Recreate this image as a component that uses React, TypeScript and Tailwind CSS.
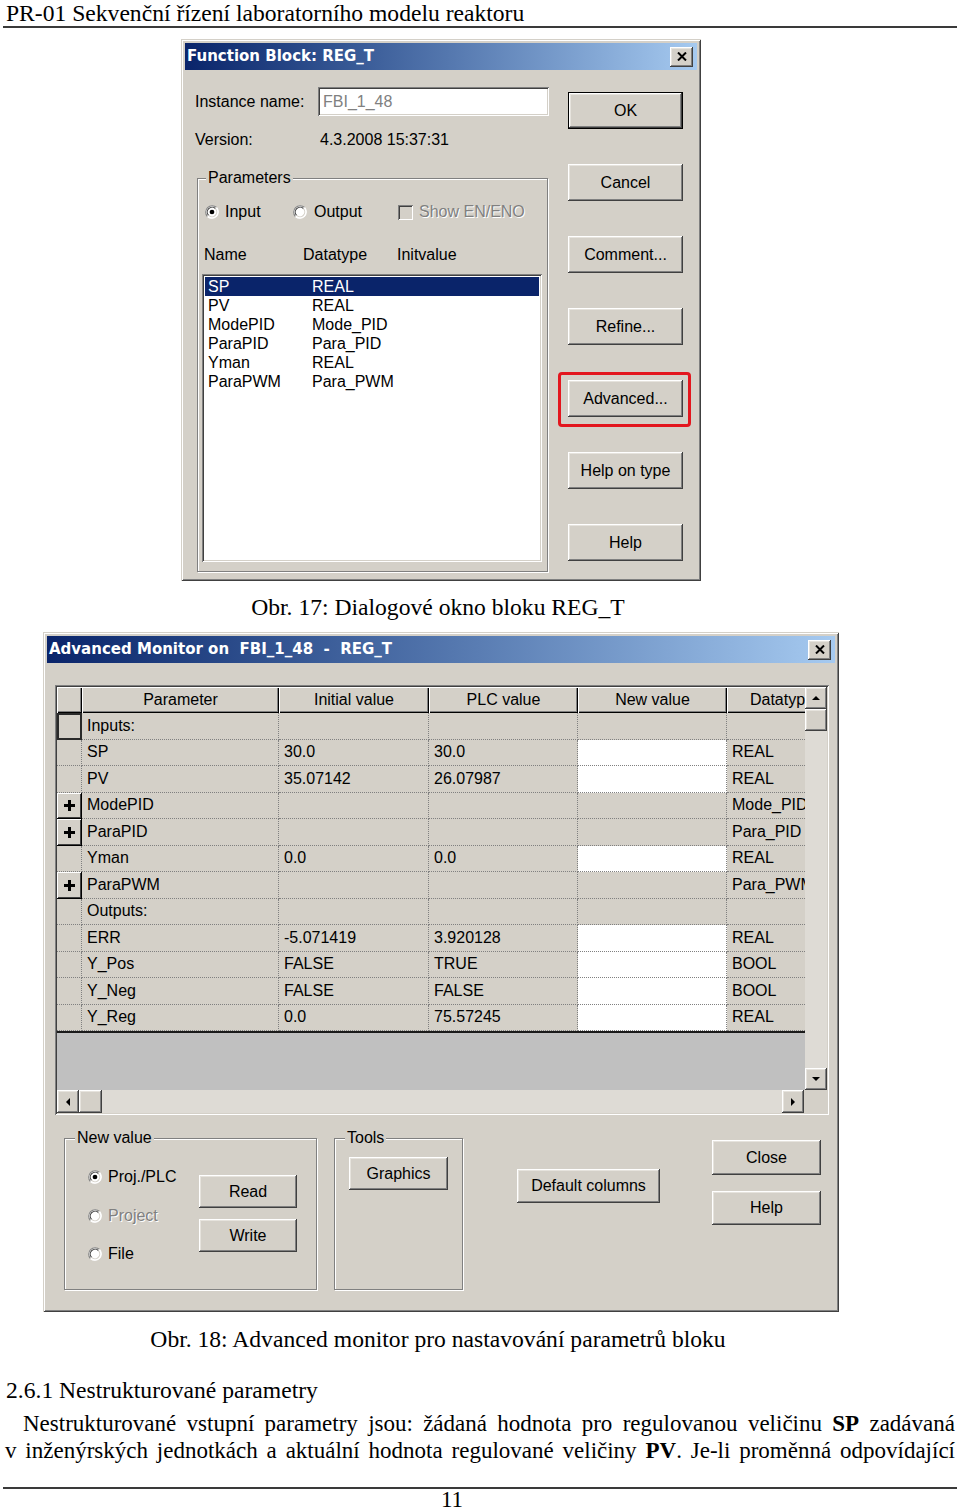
import React from "react";

const RAISED =
  "shadow-[inset_-1px_-1px_0_#404040,inset_1px_1px_0_#ffffff,inset_-2px_-2px_0_#808080,inset_2px_2px_0_#e6e3dd]";
const SUNKEN =
  "shadow-[inset_1px_1px_0_#808080,inset_-1px_-1px_0_#ffffff,inset_2px_2px_0_#404040,inset_-2px_-2px_0_#d4d0c8]";
const WINDOW =
  "shadow-[inset_1px_1px_0_#d4d0c8,inset_-1px_-1px_0_#404040,inset_2px_2px_0_#ffffff,inset_-2px_-2px_0_#808080]";
const ETCHED =
  "border border-[#808080] shadow-[inset_1px_1px_0_#ffffff,1px_1px_0_#ffffff]";

function Btn({ label, className = "" }: { label: string; className?: string }) {
  return (
    <div
      className={`flex items-center justify-center bg-[#d4d0c8] ${RAISED} ${className}`}
    >
      {label}
    </div>
  );
}

function CloseX() {
  return (
    <div
      className={`w-[23px] h-[20px] flex items-center justify-center bg-[#d4d0c8] ${RAISED}`}
    >
      <svg width="10" height="9" viewBox="0 0 10 9">
        <path d="M1 0.5 L9 8.5 M9 0.5 L1 8.5" stroke="#000" strokeWidth="2" />
      </svg>
    </div>
  );
}

function TitleBar({ title }: { title: string }) {
  return (
    <div className="h-[27px] flex items-center justify-between bg-linear-to-r from-[#0a246a] to-[#a6caf0] pl-[2px] pr-[4px]">
      <span className="text-white font-bold text-[15px] font-['DejaVu_Sans',sans-serif] whitespace-pre">
        {title}
      </span>
      <CloseX />
    </div>
  );
}

function Radio({ checked = false }: { checked?: boolean }) {
  return (
    <svg width="14" height="14" viewBox="0 0 13 13" className="shrink-0">
      <circle cx="6.5" cy="6.5" r="6" fill="#ffffff" />
      <path d="M2.26 10.74 A6 6 0 0 1 10.74 2.26" stroke="#808080" strokeWidth="1" fill="none" />
      <path d="M3.32 9.68 A4.5 4.5 0 0 1 9.68 3.32" stroke="#404040" strokeWidth="1" fill="none" />
      <path d="M10.74 2.26 A6 6 0 0 1 2.26 10.74" stroke="#ffffff" strokeWidth="1" fill="none" />
      <path d="M9.68 3.32 A4.5 4.5 0 0 1 3.32 9.68" stroke="#d4d0c8" strokeWidth="1" fill="none" />
      {checked && <circle cx="6.5" cy="6.5" r="2.2" fill="#000" />}
    </svg>
  );
}

function Arrow({ dir }: { dir: "up" | "down" | "left" | "right" }) {
  const pts =
    dir === "up"
      ? "1,7 5,3 9,7"
      : dir === "down"
      ? "1,3 5,7 9,3"
      : dir === "left"
      ? "7,1 3,5 7,9"
      : "3,1 7,5 3,9";
  return (
    <svg width="10" height="10" viewBox="0 0 10 10">
      <polygon points={pts} fill="#000" />
    </svg>
  );
}

function ScrollBtn({ dir, className = "" }: { dir: "up" | "down" | "left" | "right"; className?: string }) {
  return (
    <div className={`flex items-center justify-center bg-[#d4d0c8] ${RAISED} ${className}`}>
      <Arrow dir={dir} />
    </div>
  );
}

function Plus() {
  return (
    <svg width="11" height="11" viewBox="0 0 11 11">
      <rect x="0" y="4" width="11" height="3" fill="#000" />
      <rect x="4" y="0" width="3" height="11" fill="#000" />
    </svg>
  );
}

type Row = {
  p: string;
  i?: string;
  plc?: string;
  nv?: boolean;
  dt?: string;
  head?: "plus" | "focus";
};

const rows: Row[] = [
  { p: "Inputs:", head: "focus" },
  { p: "SP", i: "30.0", plc: "30.0", nv: true, dt: "REAL" },
  { p: "PV", i: "35.07142", plc: "26.07987", nv: true, dt: "REAL" },
  { p: "ModePID", dt: "Mode_PID", head: "plus" },
  { p: "ParaPID", dt: "Para_PID", head: "plus" },
  { p: "Yman", i: "0.0", plc: "0.0", nv: true, dt: "REAL" },
  { p: "ParaPWM", dt: "Para_PWM", head: "plus" },
  { p: "Outputs:" },
  { p: "ERR", i: "-5.071419", plc: "3.920128", nv: true, dt: "REAL" },
  { p: "Y_Pos", i: "FALSE", plc: "TRUE", nv: true, dt: "BOOL" },
  { p: "Y_Neg", i: "FALSE", plc: "FALSE", nv: true, dt: "BOOL" },
  { p: "Y_Reg", i: "0.0", plc: "75.57245", nv: true, dt: "REAL" },
];

const listRows: [string, string][] = [
  ["SP", "REAL"],
  ["PV", "REAL"],
  ["ModePID", "Mode_PID"],
  ["ParaPID", "Para_PID"],
  ["Yman", "REAL"],
  ["ParaPWM", "Para_PWM"],
];

const CELL =
  "shrink-0 h-full flex items-center pl-[5px] border-r border-b border-dotted border-[#808080] whitespace-nowrap overflow-hidden";
const HEAD =
  "shrink-0 h-full flex items-center justify-center bg-[#d4d0c8] shadow-[inset_1px_1px_0_#ffffff,inset_-1px_-1px_0_#000000,inset_-2px_-2px_0_#808080] whitespace-nowrap";

function Dialog1() {
  return (
    <div
      className={`ml-[181px] mt-[11px] w-[520px] h-[542px] bg-[#d4d0c8] p-[4px] ${WINDOW} font-['Liberation_Sans',Arial,sans-serif] text-[16px] text-black`}
    >
      <TitleBar title="Function Block: REG_T" />
      <div className="flex">
        <div className="w-[364px] pl-[10px]">
          <div className="mt-[17px] h-[29px] flex items-center">
            <span className="w-[123px]">Instance name:</span>
            <div className={`w-[231px] h-[29px] bg-white ${SUNKEN} pl-[5px] flex items-center text-[#808080]`}>
              FBI_1_48
            </div>
          </div>
          <div className="mt-[12px] h-[24px] flex items-center">
            <span className="w-[125px]">Version:</span>
            <span>4.3.2008 15:37:31</span>
          </div>
          <div className={`relative mt-[26px] ml-[2px] w-[351px] h-[394px] ${ETCHED}`}>
            <span className="absolute top-[-11px] left-[8px] px-[2px] bg-[#d4d0c8] leading-[20px]">
              Parameters
            </span>
            <div className="mt-[23px] h-[20px] flex items-center pl-[7px]">
              <div className="w-[88px] flex items-center gap-[6px]">
                <Radio checked />
                <span>Input</span>
              </div>
              <div className="w-[105px] flex items-center gap-[7px]">
                <Radio />
                <span>Output</span>
              </div>
              <div className="flex items-center gap-[6px]">
                <div className={`w-[15px] h-[15px] bg-[#d4d0c8] ${SUNKEN}`} />
                <span className="text-[#808080] [text-shadow:1px_1px_0_#ffffff]">Show EN/ENO</span>
              </div>
            </div>
            <div className="mt-[23px] h-[20px] flex items-center pl-[6px]">
              <span className="w-[99px]">Name</span>
              <span className="w-[94px]">Datatype</span>
              <span>Initvalue</span>
            </div>
            <div className={`mt-[9px] ml-[4px] w-[340px] h-[288px] bg-white ${SUNKEN} pt-[3px] px-[3px]`}>
              {listRows.map(([a, b], idx) => (
                <div
                  key={a}
                  className={`h-[19px] flex items-center ${idx === 0 ? "bg-[#0a246a] text-white" : ""}`}
                >
                  <span className="w-[107px] pl-[3px]">{a}</span>
                  <span>{b}</span>
                </div>
              ))}
            </div>
          </div>
        </div>
        <div className="ml-[19px] w-[115px] pt-[22px] flex flex-col gap-[35px]">
          <div className={`h-[37px] flex items-center justify-center bg-[#d4d0c8] border border-black ${RAISED}`}>
            OK
          </div>
          <Btn label="Cancel" className="h-[37px]" />
          <Btn label="Comment..." className="h-[37px]" />
          <Btn label="Refine..." className="h-[37px]" />
          <div className="relative">
            <Btn label="Advanced..." className="h-[37px]" />
            <div className="absolute left-[-10px] right-[-8px] top-[-8px] bottom-[-10px] border-[3px] border-[#e3161e] rounded-[4px]" />
          </div>
          <Btn label="Help on type" className="h-[37px]" />
          <Btn label="Help" className="h-[37px]" />
        </div>
      </div>
    </div>
  );
}

function Grid() {
  return (
    <div className={`ml-[8px] mt-[22px] w-[774px] h-[430px] ${SUNKEN} p-[2px] flex flex-col`}>
      <div className="h-[403px] flex">
        <div className="w-[748px] shrink-0 flex flex-col overflow-hidden">
          <div className="h-[26px] flex shrink-0">
            <div className={`w-[25px] ${HEAD}`} />
            <div className={`w-[197px] ${HEAD}`}>Parameter</div>
            <div className={`w-[150px] ${HEAD}`}>Initial value</div>
            <div className={`w-[149px] ${HEAD}`}>PLC value</div>
            <div className={`w-[149px] ${HEAD}`}>New value</div>
            <div className={`w-[110px] ${HEAD}`}>Datatype</div>
          </div>
          {rows.map((r) => (
            <div key={r.p} className="h-[26.5px] flex shrink-0">
              {r.head === "plus" ? (
                <div className="shrink-0 w-[25px] h-full flex items-center justify-center bg-[#d4d0c8] shadow-[inset_-1px_-1px_0_#000000,inset_1px_1px_0_#ffffff,inset_-2px_-2px_0_#404040]">
                  <Plus />
                </div>
              ) : r.head === "focus" ? (
                <div className="shrink-0 w-[25px] h-full border-2 border-[#2a2a2a]" />
              ) : (
                <div className="shrink-0 w-[25px] h-full border-r border-b border-dotted border-[#808080]" />
              )}
              <div className={`w-[197px] ${CELL}`}>{r.p}</div>
              <div className={`w-[150px] ${CELL}`}>{r.i ?? ""}</div>
              <div className={`w-[149px] ${CELL}`}>{r.plc ?? ""}</div>
              <div className={`w-[149px] ${CELL} ${r.nv ? "bg-white" : ""}`} />
              <div className={`w-[110px] ${CELL}`}>{r.dt ?? ""}</div>
            </div>
          ))}
          <div className="flex-1 bg-[#c0c0c0] border-t-2 border-[#1a1a1a]" />
        </div>
        <div className="w-[22px] shrink-0 flex flex-col">
          <ScrollBtn dir="up" className="h-[22px]" />
          <div className={`h-[22px] bg-[#d4d0c8] ${RAISED}`} />
          <div className="flex-1 bg-[#dedbd5]" />
          <ScrollBtn dir="down" className="h-[22px]" />
        </div>
      </div>
      <div className="h-[23px] flex">
        <ScrollBtn dir="left" className="w-[22px] shrink-0" />
        <div className={`w-[23px] shrink-0 bg-[#d4d0c8] ${RAISED}`} />
        <div className="flex-1 bg-[#dedbd5]" />
        <ScrollBtn dir="right" className="w-[22px] shrink-0" />
        <div className="w-[23px] shrink-0 bg-[#d4d0c8]" />
      </div>
    </div>
  );
}

function Dialog2() {
  return (
    <div
      className={`ml-[43px] mt-[12px] w-[796px] h-[680px] bg-[#d4d0c8] p-[4px] ${WINDOW} font-['Liberation_Sans',Arial,sans-serif] text-[16px] text-black`}
    >
      <TitleBar title="Advanced Monitor on  FBI_1_48  -  REG_T" />
      <Grid />
      <div className="flex items-start">
        <div className={`relative ml-[17px] mt-[23px] w-[253px] h-[152px] ${ETCHED} flex`}>
          <span className="absolute top-[-11px] left-[10px] px-[2px] bg-[#d4d0c8] leading-[20px]">New value</span>
          <div className="ml-[23px] w-[111px] pt-[28px] flex flex-col gap-[18.5px]">
            <div className="h-[20px] flex items-center gap-[6px]">
              <Radio checked />
              <span>Proj./PLC</span>
            </div>
            <div className="h-[20px] flex items-center gap-[6px]">
              <Radio />
              <span className="text-[#808080] [text-shadow:1px_1px_0_#ffffff]">Project</span>
            </div>
            <div className="h-[20px] flex items-center gap-[6px]">
              <Radio />
              <span>File</span>
            </div>
          </div>
          <div className="pt-[36px] w-[98px] flex flex-col gap-[11px]">
            <Btn label="Read" className="h-[33px]" />
            <Btn label="Write" className="h-[33px]" />
          </div>
        </div>
        <div className={`relative ml-[17px] mt-[23px] w-[129px] h-[152px] ${ETCHED}`}>
          <span className="absolute top-[-11px] left-[10px] px-[2px] bg-[#d4d0c8] leading-[20px]">Tools</span>
          <Btn label="Graphics" className="ml-[14px] mt-[18px] w-[99px] h-[33px]" />
        </div>
        <Btn label="Default columns" className="ml-[54px] mt-[54px] w-[143px] h-[34px]" />
        <div className="ml-[52px] mt-[25px] w-[109px] flex flex-col gap-[16px]">
          <Btn label="Close" className="h-[35px]" />
          <Btn label="Help" className="h-[34px]" />
        </div>
      </div>
    </div>
  );
}

export default function App() {
  return (
    <div className="w-[960px] h-[1512px] overflow-hidden bg-white text-black font-['Liberation_Serif','Times_New_Roman',serif]">
      <div className="h-[26px] pl-[6px] text-[23.6px] leading-[26px] whitespace-nowrap">
        PR-01 Sekvenční řízení laboratorního modelu reaktoru
      </div>
      <div className="mx-[3px] h-[2px] bg-[#3a3a3a]" />
      <Dialog1 />
      <div className="mt-[13px] h-[26px] w-[876px] text-center text-[23.6px] leading-[26px]">
        Obr. 17: Dialogové okno bloku REG_T
      </div>
      <Dialog2 />
      <div className="mt-[14px] h-[26px] w-[876px] text-center text-[23.6px] leading-[26px]">
        Obr. 18: Advanced monitor pro nastavování parametrů bloku
      </div>
      <div className="mt-[25px] h-[26px] pl-[6px] text-[23.6px] leading-[26px] whitespace-nowrap">
        2.6.1 Nestrukturované parametry
      </div>
      <div className="mt-[7px] px-[5px] text-[23px] leading-[27px]">
        <div className="pl-[18px] text-justify [text-align-last:justify] whitespace-nowrap">
          Nestrukturované vstupní parametry jsou: žádaná hodnota pro regulovanou veličinu <b>SP</b> zadávaná
        </div>
        <div className="text-justify [text-align-last:justify] whitespace-nowrap">
          v inženýrských jednotkách a aktuální hodnota regulované veličiny <b>PV</b>. Je-li proměnná odpovídající
        </div>
      </div>
      <div className="mt-[23px] mx-[3px] h-[2px] bg-[#3a3a3a]" />
      <div className="h-[22px] w-[904px] text-center text-[23px] leading-[22px]">11</div>
    </div>
  );
}
